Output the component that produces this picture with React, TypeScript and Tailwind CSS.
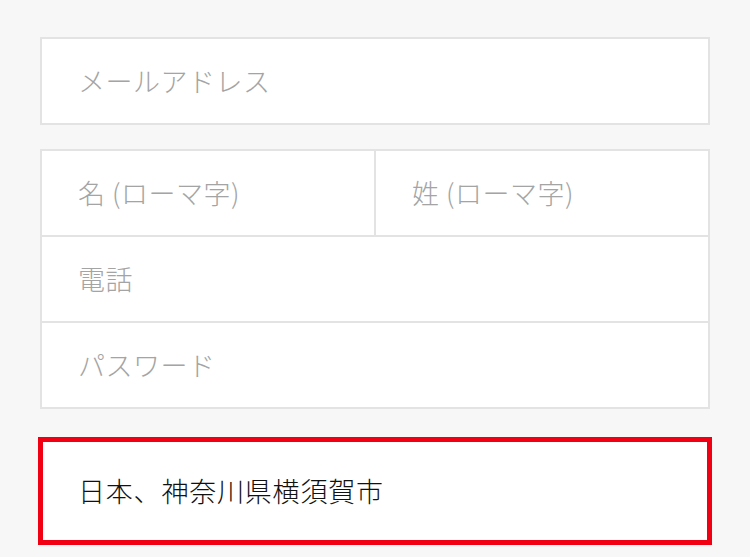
const inputBase =
  'w-full bg-transparent outline-none text-[27px] font-light tracking-[0.5px] text-[#222] placeholder:text-[#a4a4a4]'

function Field({
  placeholder,
  height = 'h-[84px]',
  className,
}: {
  placeholder: string
  height?: string
  className?: string
}) {
  return (
    <div className={'flex items-center px-[36px] bg-white ' + height + ' ' + (className ?? '')}>
      <input type="text" placeholder={placeholder} className={inputBase} />
    </div>
  )
}

export default function App() {
  return (
    <div
      className="w-[750px] h-[557px] bg-[#f7f7f7] overflow-hidden pt-[37px] px-[40px]"
      style={{ fontFamily: '"Noto Sans CJK JP", "Noto Sans", sans-serif' }}
    >
      {/* email */}
      <div className="border-2 border-[#e3e3e3] bg-white">
        <Field placeholder="メールアドレス" />
      </div>

      {/* name / phone / password */}
      <div className="mt-[24px] border-2 border-[#e3e3e3] bg-white">
        <div className="flex border-b-2 border-[#e3e3e3]">
          <Field placeholder="名 (ローマ字)" className="flex-1 border-r-2 border-[#e3e3e3]" />
          <Field placeholder="姓 (ローマ字)" className="flex-1" />
        </div>
        <div className="border-b-2 border-[#e3e3e3]">
          <Field placeholder="電話" />
        </div>
        <Field placeholder="パスワード" />
      </div>

      {/* address */}
      <div className="-mx-[2px] mt-[28px] border-[5px] border-[#f00012] bg-white h-[108px] flex items-center px-[35px]">
        <input
          type="text"
          defaultValue="日本、神奈川県横須賀市"
          className="w-full bg-transparent outline-none text-[27px] font-light tracking-[0.8px] text-[#111]"
        />
      </div>
    </div>
  )
}
